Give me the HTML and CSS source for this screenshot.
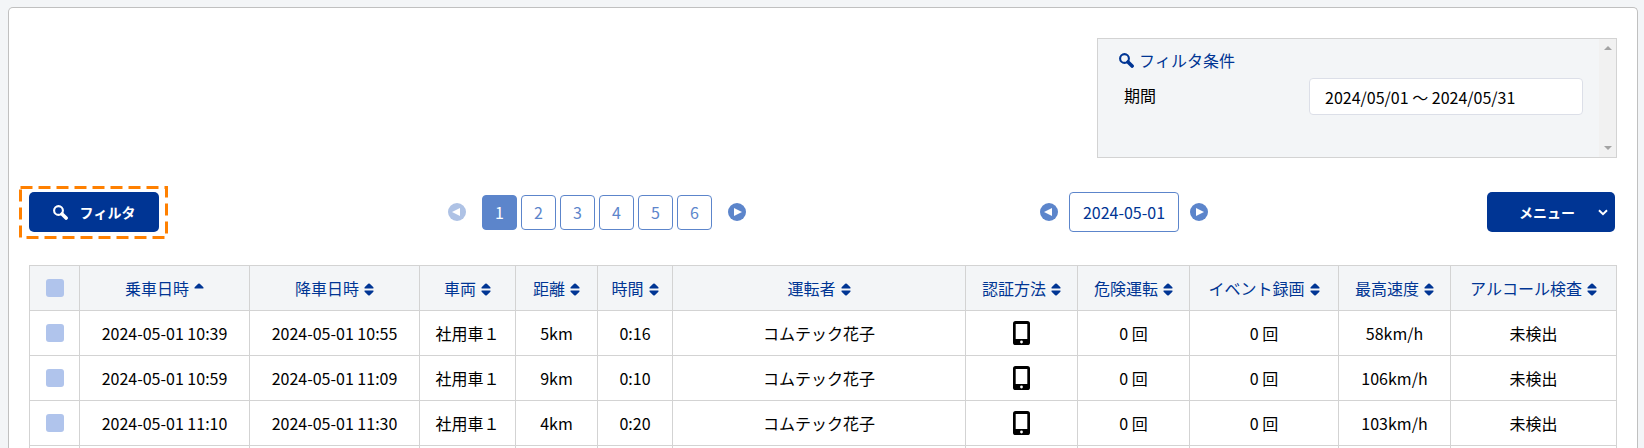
FILE: index.html
```
<!DOCTYPE html>
<html lang="ja">
  <head>
    <meta charset="utf-8" />
    <link rel="stylesheet" href="styles.css">
  </head>
  <body>
    <!-- Shared icons -->
    <svg class="sprite" aria-hidden="true">
      <symbol id="icon-search" viewBox="0 0 15 15">
        <circle cx="5.5" cy="5.5" r="4.4" fill="none" stroke="currentColor" stroke-width="2.1" />
        <path d="M9 9l4.1 4.1" stroke="currentColor" stroke-width="3.6" stroke-linecap="round" />
      </symbol>
      <symbol id="icon-up" viewBox="0 0 10 13">
        <path d="M5 0.4Q5.4 0.4 5.8 0.8L9.4 4.2Q10 5.6 9 5.6H1Q0 5.6 0.6 4.2L4.2 0.8Q4.6 0.4 5 0.4Z" fill="currentColor" />
      </symbol>
      <symbol id="icon-sort" viewBox="0 0 10 13">
        <path d="M5 0.4Q5.4 0.4 5.8 0.8L9.4 4.2Q10 5.6 9 5.6H1Q0 5.6 0.6 4.2L4.2 0.8Q4.6 0.4 5 0.4Z" fill="currentColor" />
        <path d="M5 12.6Q5.4 12.6 5.8 12.2L9.4 8.8Q10 7.4 9 7.4H1Q0 7.4 0.6 8.8L4.2 12.2Q4.6 12.6 5 12.6Z" fill="currentColor" />
      </symbol>
      <symbol id="icon-prev" viewBox="0 0 18 18">
        <circle cx="9" cy="9" r="9" fill="currentColor" />
        <path d="M12 5v8L4 9z" fill="#fff" />
      </symbol>
      <symbol id="icon-next" viewBox="0 0 18 18">
        <circle cx="9" cy="9" r="9" fill="currentColor" />
        <path d="M6 5v8l8-4z" fill="#fff" />
      </symbol>
      <symbol id="icon-phone" viewBox="0 0 17 24">
        <rect width="17" height="24" rx="2.6" fill="#000" />
        <rect x="2.7" y="3" width="11.6" height="15" fill="#fff" />
        <circle cx="8.5" cy="21" r="1.4" fill="#fff" />
      </symbol>
    </svg>

    <main class="card">
      <section class="conditions">
        <div class="conditions-body">
          <h2><svg class="icon-search"><use href="#icon-search" /></svg>フィルタ条件</h2>
          <div class="condition">
            <label for="period">期間</label>
            <input type="text" id="period" value="2024/05/01 ～ 2024/05/31" readonly>
          </div>
        </div>
        <div class="scrollbar">
          <svg width="8" height="4" viewBox="0 0 8 4"><path d="M0 4L4 0L8 4z" fill="#a3a3a3" /></svg>
          <svg width="8" height="4" viewBox="0 0 8 4"><path d="M0 0L4 4L8 0z" fill="#a3a3a3" /></svg>
        </div>
      </section>

      <div class="toolbar">
        <div class="filter">
          <button type="button" class="btn"><svg class="icon-search"><use href="#icon-search" /></svg>フィルタ</button>
          <svg class="highlight" viewBox="0 0 149 53"><rect x="1.5" y="1.5" width="146" height="50" fill="none" stroke="#ff8000" stroke-width="3" stroke-dasharray="12 6" /></svg>
        </div>

        <nav class="pagination">
          <button type="button" class="arrow" aria-label="前へ" disabled><svg><use href="#icon-prev" /></svg></button>
          <div class="pages">
            <a href="#" class="page active">1</a>
            <a href="#" class="page">2</a>
            <a href="#" class="page">3</a>
            <a href="#" class="page">4</a>
            <a href="#" class="page">5</a>
            <a href="#" class="page">6</a>
          </div>
          <button type="button" class="arrow" aria-label="次へ"><svg><use href="#icon-next" /></svg></button>
        </nav>

        <div class="date-nav">
          <button type="button" class="arrow" aria-label="前日"><svg><use href="#icon-prev" /></svg></button>
          <button type="button" class="date">2024-05-01</button>
          <button type="button" class="arrow" aria-label="翌日"><svg><use href="#icon-next" /></svg></button>
        </div>

        <button type="button" class="btn menu">
          <span>メニュー</span>
          <svg width="10" height="7" viewBox="0 0 10 7"><path d="M1 1.2l4 4l4-4" fill="none" stroke="#fff" stroke-width="2" /></svg>
        </button>
      </div>

      <table>
        <colgroup>
          <col class="col-check">
          <col class="col-datetime">
          <col class="col-datetime">
          <col class="col-car">
          <col class="col-distance">
          <col class="col-time">
          <col>
          <col class="col-medium">
          <col class="col-medium">
          <col class="col-event">
          <col class="col-medium">
          <col class="col-alcohol">
        </colgroup>
        <thead>
          <tr>
            <th><input type="checkbox" aria-label="すべて選択"></th>
            <th>乗車日時<svg><use href="#icon-up" /></svg></th>
            <th>降車日時<svg><use href="#icon-sort" /></svg></th>
            <th>車両<svg><use href="#icon-sort" /></svg></th>
            <th>距離<svg><use href="#icon-sort" /></svg></th>
            <th>時間<svg><use href="#icon-sort" /></svg></th>
            <th>運転者<svg><use href="#icon-sort" /></svg></th>
            <th>認証方法<svg><use href="#icon-sort" /></svg></th>
            <th>危険運転<svg><use href="#icon-sort" /></svg></th>
            <th>イベント録画<svg><use href="#icon-sort" /></svg></th>
            <th>最高速度<svg><use href="#icon-sort" /></svg></th>
            <th>アルコール検査<svg><use href="#icon-sort" /></svg></th>
          </tr>
        </thead>
        <tbody>
          <tr>
            <td><input type="checkbox" aria-label="選択"></td>
            <td>2024-05-01 10:39</td>
            <td>2024-05-01 10:55</td>
            <td>社用車１</td>
            <td>5km</td>
            <td>0:16</td>
            <td>コムテック花子</td>
            <td><svg class="phone"><use href="#icon-phone" /></svg></td>
            <td>0 回</td>
            <td>0 回</td>
            <td>58km/h</td>
            <td>未検出</td>
          </tr>
          <tr>
            <td><input type="checkbox" aria-label="選択"></td>
            <td>2024-05-01 10:59</td>
            <td>2024-05-01 11:09</td>
            <td>社用車１</td>
            <td>9km</td>
            <td>0:10</td>
            <td>コムテック花子</td>
            <td><svg class="phone"><use href="#icon-phone" /></svg></td>
            <td>0 回</td>
            <td>0 回</td>
            <td>106km/h</td>
            <td>未検出</td>
          </tr>
          <tr>
            <td><input type="checkbox" aria-label="選択"></td>
            <td>2024-05-01 11:10</td>
            <td>2024-05-01 11:30</td>
            <td>社用車１</td>
            <td>4km</td>
            <td>0:20</td>
            <td>コムテック花子</td>
            <td><svg class="phone"><use href="#icon-phone" /></svg></td>
            <td>0 回</td>
            <td>0 回</td>
            <td>103km/h</td>
            <td>未検出</td>
          </tr>
          <tr>
            <td></td><td></td><td></td><td></td><td></td><td></td>
            <td></td><td></td><td></td><td></td><td></td><td></td>
          </tr>
        </tbody>
      </table>
    </main>
  </body>
</html>
```
FILE: styles.css
```
* {
  box-sizing: border-box;
}

body {
  height: 100vh;
  margin: 0;
  padding: 7px 6px 0 8px;
  overflow: hidden;
  font-family: "Noto Sans CJK JP", sans-serif;
  font-size: 16px;
  font-kerning: none;
  line-height: 24px;
  color: #000;
  background: #f3f5f7;
}

button,
input {
  font: inherit;
  font-kerning: none;
  margin: 0;
}

button {
  cursor: pointer;
}

.sprite {
  position: absolute;
  width: 0;
  height: 0;
}

.card {
  height: 100%;
  padding: 30px 20px 0;
  overflow: hidden;
  background: #fff;
  border: 1px solid #c0c0c0;
  border-bottom: none;
  border-radius: 5px 5px 0 0;
}

.icon-search {
  width: 15px;
  height: 15px;
}

/* Filter conditions */
.conditions {
  display: flex;
  width: 520px;
  height: 120px;
  margin-left: auto;
  background: #f3f5f7;
  border: 1px solid #d3d3d3;
}

.conditions-body {
  flex: 1;
  padding: 9px 16px 0 21px;
}

.conditions h2 {
  display: flex;
  align-items: center;
  gap: 5px;
  margin: 0 0 6px;
  font-size: 16px;
  font-weight: 400;
  color: #003594;
}

.condition {
  display: flex;
  justify-content: space-between;
  padding-left: 5px;
}

.condition label {
  line-height: 34px;
}

.condition input {
  width: 274px;
  height: 37px;
  padding: 0 15px;
  color: #000;
  background: #fff;
  border: 1px solid #dcdfe8;
  border-radius: 4px;
}

.scrollbar {
  display: flex;
  flex-direction: column;
  align-items: center;
  justify-content: space-between;
  width: 17px;
  padding: 7px 0;
  background: #f1f1f1;
}

/* Toolbar */
.toolbar {
  display: flex;
  align-items: center;
  justify-content: space-between;
  margin: 34px 2px 33px 0;
}

.btn {
  display: flex;
  align-items: center;
  height: 40px;
  color: #fff;
  font-size: 14px;
  font-weight: 700;
  background: #003594;
  border: none;
  border-radius: 5px;
}

.filter {
  position: relative;
}

.filter .btn {
  justify-content: center;
  gap: 12px;
  width: 130px;
}

.highlight {
  position: absolute;
  top: -6px;
  left: -10px;
  width: 149px;
  height: 53px;
  pointer-events: none;
}

.menu {
  justify-content: flex-end;
  gap: 23px;
  width: 128px;
  padding: 0 7px;
}

.pagination {
  display: flex;
  align-items: center;
  gap: 16px;
  margin-left: 10px;
}

.pages {
  display: flex;
  gap: 4px;
}

.page {
  width: 35px;
  height: 35px;
  line-height: 33px;
  text-align: center;
  text-decoration: none;
  color: #5c85cb;
  border: 1px solid #5c85cb;
  border-radius: 4px;
}

.page.active {
  color: #fff;
  background: #5c85cb;
}

.arrow {
  width: 18px;
  height: 18px;
  padding: 0;
  color: #5c85cb;
  background: none;
  border: none;
}

.arrow:disabled {
  color: #aec2e5;
}

.arrow svg {
  display: block;
  width: 18px;
  height: 18px;
}

.date-nav {
  display: flex;
  align-items: center;
  gap: 11px;
  margin-left: 15px;
}

.date {
  width: 110px;
  height: 40px;
  padding: 0;
  color: #003594;
  background: #fff;
  border: 1px solid #5c85cb;
  border-radius: 4px;
}

/* Records */
table {
  width: 100%;
  table-layout: fixed;
  border-collapse: collapse;
}

th,
td {
  height: 45px;
  padding: 0;
  text-align: center;
  vertical-align: middle;
  white-space: nowrap;
  border: 1px solid #d3d3d3;
}

th {
  font-weight: 400;
  color: #003594;
  background: #f3f5f7;
}

th svg {
  width: 10px;
  height: 13px;
  margin-left: 5px;
  vertical-align: -1px;
}

th input,
td input {
  display: block;
  width: 18px;
  height: 18px;
  margin: 0 auto;
  appearance: none;
  background: #b0c4ec;
  border-radius: 3px;
}

.phone {
  display: block;
  width: 17px;
  height: 24px;
  margin: 0 auto;
}

.col-check {
  width: 50px;
}

.col-datetime {
  width: 170px;
}

.col-car {
  width: 96px;
}

.col-distance {
  width: 82px;
}

.col-time {
  width: 75px;
}

.col-medium {
  width: 112px;
}

.col-event {
  width: 149px;
}

.col-alcohol {
  width: 166px;
}
```
